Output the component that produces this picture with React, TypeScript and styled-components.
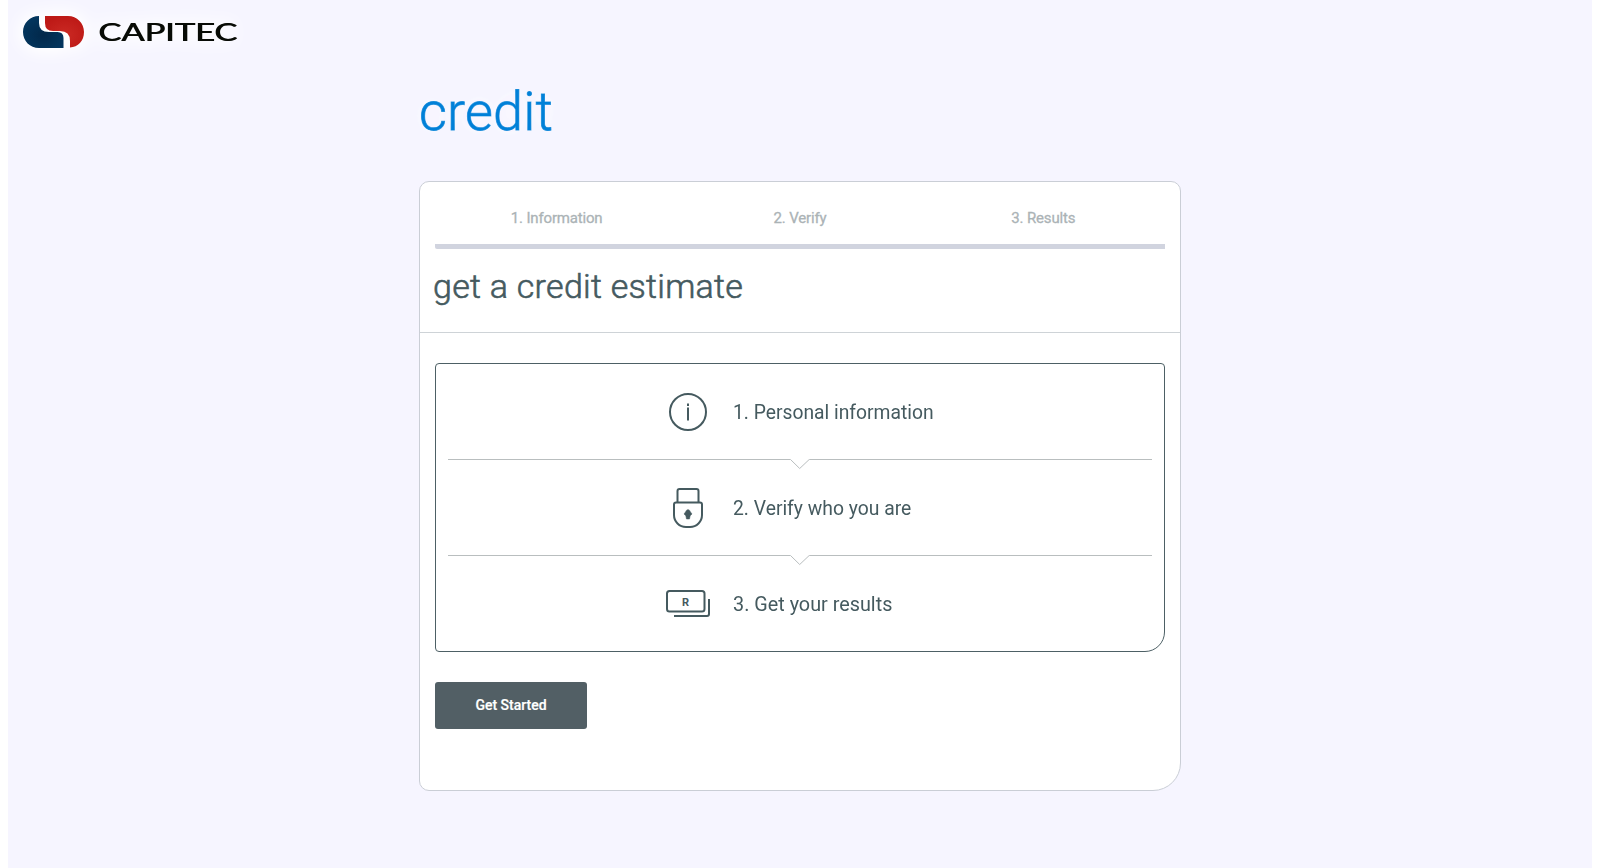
import styled, { createGlobalStyle } from "styled-components"

const GlobalStyle = createGlobalStyle`
  body {
    margin: 0 8px;
    background: #ffffff;
    font-family: Roboto, "Liberation Sans", sans-serif;
  }

  * {
    box-sizing: border-box;
  }
`

const Page = styled.div`
  min-height: 100vh;
  background: #f6f5ff;
  color: #455a5f;
`

const Header = styled.header`
  height: 82px;
  padding: 15px 0 0 15px;
`

const Logo = styled.svg`
  display: block;
  overflow: visible;
  filter: drop-shadow(0 0 7px #ffffff) drop-shadow(0 0 10px #ffffff);
`

/* The sideways shadow thickens the vertical strokes only */
const Wordmark = styled.text`
  font-family: Lato, sans-serif;
  font-size: 24.5px;
  font-weight: 400;
  fill: #080b06;
  filter: drop-shadow(1.2px 0 0 #080b06);
`

const Content = styled.main`
  width: 762px;
  margin: 0 auto;
`

const PageTitle = styled.h1`
  height: 99px;
  margin: 0;
  padding-top: 1px;
  font-size: 54px;
  font-weight: 300;
  line-height: 58px;
  letter-spacing: 0.2px;
  color: #0080d8;
  -webkit-text-stroke: 0.9px #0080d8;
  paint-order: stroke fill;
  text-shadow:
    0 0 20px #fff8ff,
    0 0 20px #fff8ff;
`

const Card = styled.section`
  height: 610px;
  background: #ffffff;
  border: 1px solid #caced6;
  border-radius: 10px 10px 28px 10px;
`

const CardHeader = styled.div`
  height: 151px;
  padding: 22px 15px 0;
  border-bottom: 1px solid #ced3d7;
`

const Tabs = styled.ol`
  display: grid;
  grid-template-columns: repeat(3, 1fr);
  height: 45px;
  margin: 0;
  padding: 0;
  list-style: none;
  border-bottom: 5px solid #d1d4df;
  border-radius: 2px 0 0 2px;
`

const Tab = styled.li`
  font-size: 15px;
  font-weight: 400;
  line-height: 28px;
  letter-spacing: -0.17px;
  text-align: center;
  color: #abb3b6;
  -webkit-text-stroke: 0.3px #abb3b6;
`

const CardTitle = styled.h2`
  margin: 15px 0 0 -2px;
  font-size: 34px;
  font-weight: 300;
  line-height: 44px;
  letter-spacing: 0.27px;
  -webkit-text-stroke: 0.6px #455a5f;
`

const CardBody = styled.div`
  padding: 30px 15px 0;
`

const StepList = styled.ul`
  height: 289px;
  margin: 0;
  padding: 0 12px;
  list-style: none;
  border: 1px solid #4d6065;
  border-radius: 4px 4px 20px 4px;
`

const Step = styled.li`
  display: flex;
  align-items: center;
  position: relative;
  height: 96px;
  padding-left: 217px;
`

const StepIcon = styled.svg`
  width: 46px;
  height: 46px;
  margin-right: 22px;
  fill: none;
  stroke: #455a5f;
  stroke-width: 2;
`

const StepLabel = styled.span<{ $stretch: number }>`
  font-size: 21px;
  transform: scaleX(${({ $stretch }) => $stretch});
  transform-origin: left center;
`

const IconLetter = styled.text`
  font-size: 11px;
  font-weight: 700;
  fill: #455a5f;
  stroke: none;
`

/* Separator with a small notch, laid over the seam between two steps */
const Notch = styled.svg`
  position: absolute;
  left: 0;
  bottom: -10px;
  width: 704px;
  height: 11px;
  fill: none;
  stroke: #b9bebf;
`

const StartButton = styled.button`
  display: block;
  width: 152px;
  height: 47px;
  margin-top: 30px;
  padding: 0 0 1px;
  border: 0;
  border-radius: 3px;
  background: #525f65;
  color: #ffffff;
  font-family: inherit;
  font-size: 14px;
  font-weight: 500;
  -webkit-text-stroke: 0.2px #ffffff;
`

const InfoIcon = () => (
  <StepIcon viewBox="0 0 46 46">
    <circle cx="23" cy="23" r="18" />
    <path d="M23 18.500v13M23 14.500v2.500" />
  </StepIcon>
)

const LockIcon = () => (
  <StepIcon viewBox="0 0 46 46">
    <path d="M12.500 17V6a2 2 0 0 1 2-2h17a2 2 0 0 1 2 2v11" />
    <path d="M11 17.500h24a2 2 0 0 1 2 2V30a12 12 0 0 1-12 12h-4A12 12 0 0 1 9 30V19.500a2 2 0 0 1 2-2z" />
    <path
      d="M23 24.500q2 .5 2.500 2.500l1.500 2-1.800 1.800-.7 3.200h-3l-.7-3.200L19 29l1.500-2q.5-2 2.500-2.500z"
      fill="#455a5f"
      strokeWidth="0.500"
    />
  </StepIcon>
)

const NotesIcon = () => (
  <StepIcon viewBox="0 0 46 46">
    <rect x="2" y="10" width="37.500" height="20.500" rx="2.500" />
    <path d="M44 18v15a2 2 0 0 1-2 2H9" />
    <IconLetter x="17" y="24.500">
      R
    </IconLetter>
  </StepIcon>
)

const Divider = () => (
  <Notch viewBox="0 0 704 11">
    <path d="M0 .5H342.500L351.700 9.500l9.500-9H704" />
  </Notch>
)

const tabs = ["1. Information", "2. Verify", "3. Results"]

const steps = [
  { label: "1. Personal information", Icon: InfoIcon, stretch: 0.918 },
  { label: "2. Verify who you are", Icon: LockIcon, stretch: 0.92 },
  { label: "3. Get your results", Icon: NotesIcon, stretch: 0.943 },
]

function CapitecLogo() {
  return (
    <Logo width="216" height="34" viewBox="0 0 216 34" role="img">
      <defs>
        <radialGradient id="blue" cx="0.5" cy="0.6" r="0.6">
          <stop offset="0" stopColor="#02284a" />
          <stop offset="1" stopColor="#03365f" />
        </radialGradient>
        <radialGradient id="red" cx="0.5" cy="0.6" r="0.6">
          <stop offset="0" stopColor="#cb2a24" />
          <stop offset="1" stopColor="#bd1916" />
        </radialGradient>
      </defs>
      <path
        d="M16 1C7 1 0 8 0 17s7 16 16 16h24.500V23q0-6-6-6H26Q16 17 16 8z"
        fill="url(#blue)"
      />
      <path
        d="M22 1h23c9 0 16 7 16 16s-6 15-14 15.500V26q0-10-10-10H30q-8 0-8-8z"
        fill="url(#red)"
      />
      <Wordmark x="75" y="26" textLength="139" lengthAdjust="spacingAndGlyphs">
        CAPITEC
      </Wordmark>
    </Logo>
  )
}

function App() {
  return (
    <>
      <GlobalStyle />
      <Page>
        <Header>
          <CapitecLogo />
        </Header>
        <Content>
          <PageTitle>credit</PageTitle>
          <Card>
            <CardHeader>
              <Tabs>
                {tabs.map((tab) => (
                  <Tab key={tab}>{tab}</Tab>
                ))}
              </Tabs>
              <CardTitle>get a credit estimate</CardTitle>
            </CardHeader>
            <CardBody>
              <StepList>
                {steps.map(({ label, Icon, stretch }, index) => (
                  <Step key={label}>
                    <Icon />
                    <StepLabel $stretch={stretch}>{label}</StepLabel>
                    {index < steps.length - 1 && <Divider />}
                  </Step>
                ))}
              </StepList>
              <StartButton type="button">Get Started</StartButton>
            </CardBody>
          </Card>
        </Content>
      </Page>
    </>
  )
}

export default App
